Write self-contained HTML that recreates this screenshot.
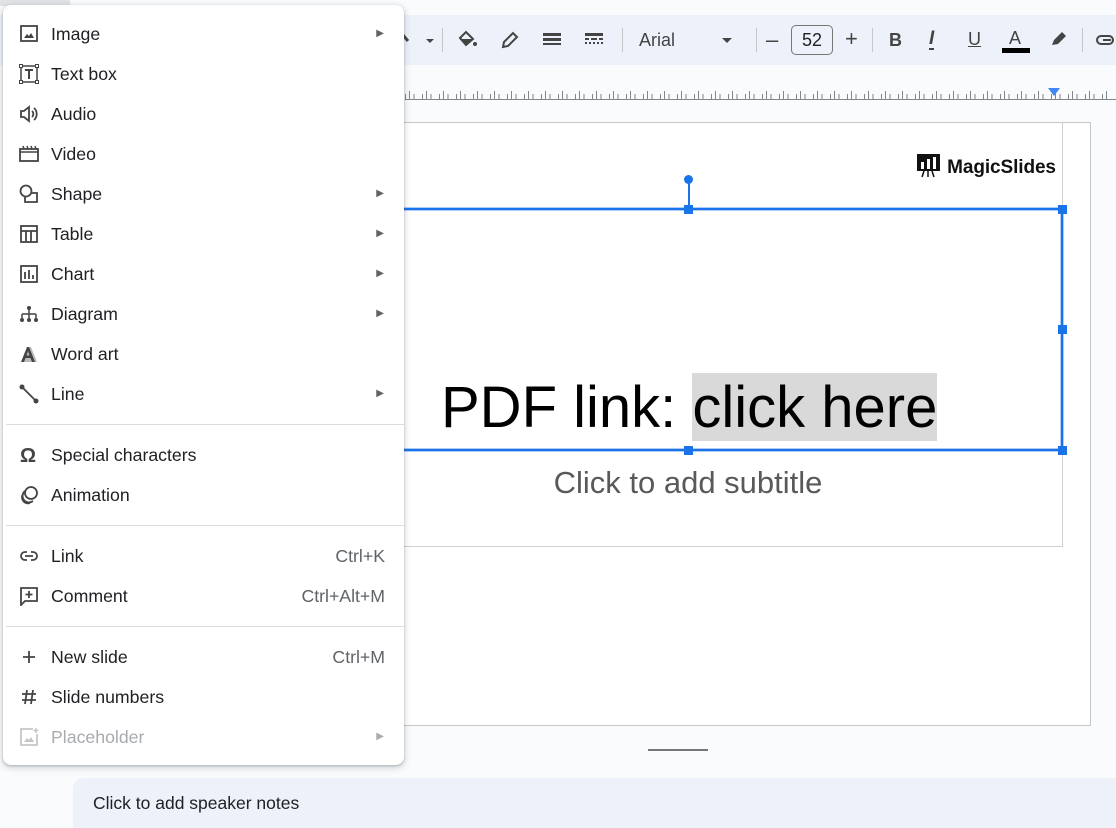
<!DOCTYPE html>
<html><head><meta charset="utf-8"><style>
*{margin:0;padding:0;box-sizing:border-box}
body{width:1116px;height:828px;overflow:hidden;background:#f9fbfd;font-family:"Liberation Sans",Arial,sans-serif;position:relative}
.abs{position:absolute}
.tb{left:0;top:15px;width:1116px;height:50px;background:#edf2fa}
.sep{position:absolute;top:28px;width:1px;height:24px;background:#c7c7c7}
.ic{position:absolute;top:28px}
.ruler{left:405px;top:99px;width:711px;height:1px;background:#80868b}
.slide{left:380px;top:122px;width:711px;height:604px;background:#fff;border:1px solid #c7c7c7}
.inner{left:380px;top:122px;width:683px;height:425px;border-right:1px solid #d0d0d0;border-bottom:1px solid #d0d0d0}
.menu{left:3px;top:5px;width:401px;height:760px;background:#fff;border-radius:8px;box-shadow:0 2px 6px 2px rgba(60,64,67,.15),0 1px 2px rgba(60,64,67,.3)}
.it{position:absolute;left:0;width:401px;height:40px;font-size:17.7px;color:#202124;line-height:40px}
.it .t{position:absolute;left:48px}
.it .a{position:absolute;right:20px;font-size:10px;color:#5f6368}
.it .k{position:absolute;right:19px;color:#5f6368;font-size:17.7px}
.it svg{position:absolute;left:16px;top:10px}
.hr{position:absolute;left:3px;width:398px;height:1px;background:#dadce0}
.h{position:absolute;width:9px;height:9px;background:#1a73e8}
</style></head><body>
<div class="abs" style="left:0;top:0;width:70px;height:6px;background:#e1e3e6"></div>
<div class="abs tb"></div>
<div class="sep" style="left:442px"></div>
<div class="sep" style="left:622px"></div>
<div class="sep" style="left:756px"></div>
<div class="sep" style="left:872px"></div>
<div class="sep" style="left:1082px"></div>
<svg class="ic" style="left:400px" width="40" height="24"><path d="M2 6 L8 13" stroke="#444" stroke-width="3"/><path d="M26 11 l8 0 -4 4z" fill="#444"/></svg>
<svg class="ic" style="left:456px" width="24" height="24"><path d="M4 10 L10 4 L17 11 L10 17z" fill="none" stroke="#444" stroke-width="2"/><path d="M4 11 h13 L10 17z" fill="#444"/><circle cx="19" cy="16" r="2" fill="#444"/></svg>
<svg class="ic" style="left:498px" width="24" height="24"><path d="M5 19 L6 14 L15 5 L19 9 L10 18z" fill="none" stroke="#444" stroke-width="2"/></svg>
<svg class="ic" style="left:540px" width="24" height="24"><rect x="3" y="5" width="18" height="3" fill="#444"/><rect x="3" y="10" width="18" height="3" fill="#444"/><rect x="3" y="15" width="18" height="2" fill="#444"/></svg>
<svg class="ic" style="left:582px" width="24" height="24"><rect x="3" y="5" width="18" height="3" fill="#444"/><path d="M3 11h4M9 11h6M17 11h4" stroke="#444" stroke-width="2"/><path d="M3 15h2M7 15h2M11 15h2M15 15h2M19 15h2" stroke="#444" stroke-width="2"/></svg>
<div class="abs" style="left:639px;top:30px;font-size:18px;color:#444">Arial</div>
<svg class="ic" style="left:720px" width="16" height="24"><path d="M2 10h10l-5 5z" fill="#444"/></svg>
<div class="abs" style="left:766px;top:27px;font-size:22px;color:#444">–</div>
<div class="abs" style="left:791px;top:25px;width:42px;height:30px;border:1px solid #747775;border-radius:5px;font-size:18px;color:#222;text-align:center;line-height:28px">52</div>
<div class="abs" style="left:845px;top:26px;font-size:22px;color:#444">+</div>
<div class="abs" style="left:889px;top:30px;font-size:18px;font-weight:bold;color:#444">B</div>
<div class="abs" style="left:929px;top:30px;font-size:19px;font-style:italic;font-weight:bold;color:#444;border-bottom:2px solid #444;line-height:18px">I</div>
<div class="abs" style="left:968px;top:29px;font-size:18px;color:#444;text-decoration:underline">U</div>
<div class="abs" style="left:1009px;top:28px;font-size:18px;color:#444">A</div>
<div class="abs" style="left:1002px;top:48px;width:28px;height:5px;background:#000"></div>
<svg class="ic" style="left:1046px" width="24" height="24"><path d="M6 17 L8 12 L16 4 L20 8 L12 16z" fill="#444"/></svg>
<svg class="ic" style="left:1095px" width="24" height="24"><rect x="2" y="8" width="16" height="8" rx="4" fill="none" stroke="#444" stroke-width="2"/><path d="M8 12h8" stroke="#444" stroke-width="2"/></svg>
<div class="abs ruler"></div>
<div class="abs" style="left:405px;top:89px;width:700px;height:10px;background:repeating-linear-gradient(90deg,#80868b 0 1px,transparent 1px 8.5px);clip-path:inset(5px 0 0 0)"></div>
<div class="abs" style="left:409px;top:89px;width:700px;height:10px;background:repeating-linear-gradient(90deg,#80868b 0 1px,transparent 1px 17px);clip-path:inset(2px 0 0 0)"></div>
<div class="abs" style="left:1048px;top:88px;width:0;height:0;border-left:6px solid transparent;border-right:6px solid transparent;border-top:8px solid #4285f4"></div>
<div class="abs slide"></div>
<div class="abs inner"></div>
<div class="abs" style="left:916px;top:153px;font-size:19px;font-weight:bold;color:#111;letter-spacing:-0.1px">
<svg width="26" height="25" style="vertical-align:-5px"><rect x="1" y="1" width="23" height="17" fill="#111"/><rect x="5" y="9" width="3" height="7" fill="#fff"/><rect x="11" y="6" width="3" height="10" fill="#fff"/><rect x="17" y="4" width="3" height="12" fill="#fff"/><path d="M8 18l-2 6M12 18v6M16 18l2 6" stroke="#111" stroke-width="1.5"/></svg> MagicSlides</div>
<div class="abs" style="left:400px;top:208px;width:663px;height:243px;border:2px solid #1a73e8;box-shadow:0 0 0 1px #aecbfa, inset 0 0 0 1px #aecbfa"></div>
<div class="abs" style="left:688px;top:180px;width:2px;height:30px;background:#1a73e8"></div>
<div class="abs" style="left:684px;top:175px;width:9px;height:9px;border-radius:50%;background:#1a73e8"></div>
<div class="h" style="left:684px;top:205px"></div><div class="h" style="left:1058px;top:205px"></div>
<div class="h" style="left:1058px;top:325px"></div><div class="h" style="left:684px;top:446px"></div><div class="h" style="left:1058px;top:446px"></div>
<div class="abs" style="left:692px;top:373px;width:245px;height:68px;background:#d9d9d9"></div>
<div class="abs" style="left:441px;top:374px;font-size:58px;color:#000;white-space:nowrap">PDF link: click here</div>
<div class="abs" style="left:480px;top:465px;width:416px;text-align:center;font-size:31px;color:#595959">Click to add subtitle</div>
<div class="abs" style="left:648px;top:749px;width:60px;height:2px;background:#747775"></div>
<div class="abs" style="left:73px;top:778px;width:1043px;height:50px;background:#edf2fa;border-top-left-radius:10px"></div>
<div class="abs" style="left:93px;top:793px;font-size:17.5px;color:#202124">Click to add speaker notes</div>

<div class="abs menu">
<div class="it" style="top:9px"><svg width="20" height="20"><rect x="2" y="2" width="16" height="15" fill="none" stroke="#444" stroke-width="1.8"/><path d="M5 14 L8 10 L10 12 L12 9 L15 14z" fill="#444"/></svg><span class="t">Image</span><span class="a">▶</span></div>
<div class="it" style="top:49px"><svg width="20" height="20"><rect x="2" y="2" width="16" height="16" fill="none" stroke="#444" stroke-width="1.5"/><rect x="0.5" y="0.5" width="3" height="3" fill="#fff" stroke="#444"/><rect x="16.5" y="0.5" width="3" height="3" fill="#fff" stroke="#444"/><rect x="0.5" y="16.5" width="3" height="3" fill="#fff" stroke="#444"/><rect x="16.5" y="16.5" width="3" height="3" fill="#fff" stroke="#444"/><path d="M6 6h8M10 6v9" stroke="#444" stroke-width="2"/></svg><span class="t">Text box</span></div>
<div class="it" style="top:89px"><svg width="20" height="20"><path d="M2 7h3l5-4v14l-5-4H2z" fill="none" stroke="#444" stroke-width="1.8"/><path d="M13 7a4 4 0 010 6M15 4a8 8 0 010 12" fill="none" stroke="#444" stroke-width="1.8"/></svg><span class="t">Audio</span></div>
<div class="it" style="top:129px"><svg width="20" height="20"><rect x="1" y="5" width="18" height="12" fill="none" stroke="#444" stroke-width="1.8"/><path d="M4 2l1 3M8 2l1 3M12 2l1 3M16 2l1 3M1 8h18" stroke="#444" stroke-width="1.5"/></svg><span class="t">Video</span></div>
<div class="it" style="top:169px"><svg width="20" height="20"><circle cx="7" cy="7" r="5.5" fill="none" stroke="#444" stroke-width="1.8"/><path d="M12 9h6v9H6v-5" fill="none" stroke="#444" stroke-width="1.8"/></svg><span class="t">Shape</span><span class="a">▶</span></div>
<div class="it" style="top:209px"><svg width="20" height="20"><rect x="2" y="2" width="16" height="16" fill="none" stroke="#444" stroke-width="1.8"/><path d="M2 7h16M7 7v11M12 7v11" stroke="#444" stroke-width="1.8"/></svg><span class="t">Table</span><span class="a">▶</span></div>
<div class="it" style="top:249px"><svg width="20" height="20"><rect x="2" y="2" width="16" height="16" fill="none" stroke="#444" stroke-width="1.8"/><path d="M6 8v7M10 6v9M14 11v4" stroke="#444" stroke-width="1.8"/></svg><span class="t">Chart</span><span class="a">▶</span></div>
<div class="it" style="top:289px"><svg width="20" height="20"><circle cx="10" cy="4" r="2" fill="#444"/><path d="M10 5v6M3 10h14M3 10v4M10 10v4M17 10v4" stroke="#444" stroke-width="1.5"/><circle cx="3" cy="16" r="2" fill="#444"/><circle cx="10" cy="16" r="2" fill="#444"/><circle cx="17" cy="16" r="2" fill="#444"/></svg><span class="t">Diagram</span><span class="a">▶</span></div>
<div class="it" style="top:329px"><svg width="20" height="20"><path d="M3 18L9 3h3l6 15" fill="#bbb"/><path d="M2 18L8 3h2l6 15h-3l-1.5-4H6.5L5 18zM7.5 11.5h3L9 7z" fill="#444"/></svg><span class="t">Word art</span></div>
<div class="it" style="top:369px"><svg width="20" height="20"><path d="M3 3L17 17" stroke="#444" stroke-width="1.8"/><circle cx="3" cy="3" r="2.5" fill="#444"/><circle cx="17" cy="17" r="2.5" fill="#444"/></svg><span class="t">Line</span><span class="a">▶</span></div>
<div class="hr" style="top:419px"></div>
<div class="it" style="top:430px"><svg width="20" height="20"><text x="1" y="17" font-size="20" font-weight="bold" fill="#444" font-family="Liberation Sans">Ω</text></svg><span class="t">Special characters</span></div>
<div class="it" style="top:470px"><svg width="20" height="20"><circle cx="12" cy="8" r="6" fill="none" stroke="#444" stroke-width="1.8"/><path d="M6 6a6 6 0 008 10M4 9a6 6 0 007 9" fill="none" stroke="#444" stroke-width="1.8"/></svg><span class="t">Animation</span></div>
<div class="hr" style="top:520px"></div>
<div class="it" style="top:531px"><svg width="20" height="20"><path d="M8 6H6a4 4 0 000 8h2M12 6h2a4 4 0 010 8h-2M6 10h8" fill="none" stroke="#444" stroke-width="1.8"/></svg><span class="t">Link</span><span class="k">Ctrl+K</span></div>
<div class="it" style="top:571px"><svg width="20" height="20"><path d="M2 2h16v13H6l-4 4z" fill="none" stroke="#444" stroke-width="1.8"/><path d="M10 5v7M6.5 8.5h7" stroke="#444" stroke-width="1.8"/></svg><span class="t">Comment</span><span class="k">Ctrl+Alt+M</span></div>
<div class="hr" style="top:621px"></div>
<div class="it" style="top:632px"><svg width="20" height="20"><path d="M10 4v12M4 10h12" stroke="#444" stroke-width="1.8"/></svg><span class="t">New slide</span><span class="k">Ctrl+M</span></div>
<div class="it" style="top:672px"><svg width="20" height="20"><path d="M8 3L6 17M14 3L12 17M3 7h14M3 13h14" stroke="#444" stroke-width="1.8"/></svg><span class="t">Slide numbers</span></div>
<div class="it" style="top:712px;color:#a8abaf"><svg width="20" height="20"><path d="M14 2H2v16h16V7" fill="none" stroke="#c4c6c9" stroke-width="1.8"/><path d="M17 1v5M14.5 3.5h5" stroke="#c4c6c9" stroke-width="1.5"/><path d="M5 15l3-4 2 2 2-3 3 5z" fill="#c4c6c9"/></svg><span class="t">Placeholder</span><span class="a" style="color:#a8abaf">▶</span></div>
</div>
</body></html>
